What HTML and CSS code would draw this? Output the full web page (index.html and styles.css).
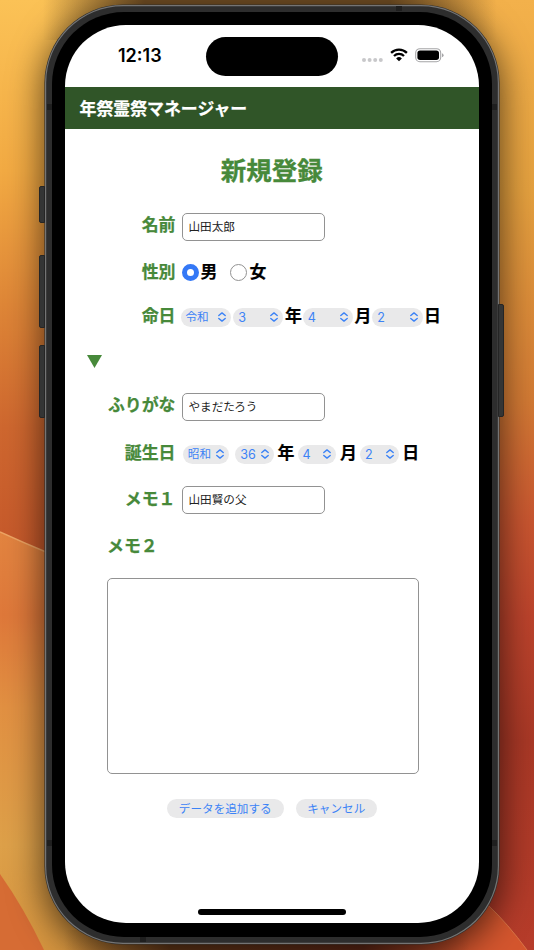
FILE: index.html
```html
<!DOCTYPE html>
<html lang="ja">
<head>
<meta charset="utf-8">
<title>年祭霊祭マネージャー</title>
<link rel="stylesheet" href="styles.css">
</head>
<body>
<svg class="wallpaper" viewBox="0 0 534 950" preserveAspectRatio="none" aria-hidden="true">
  <defs>
    <linearGradient id="left" x1="0" y1="0" x2="0" y2="1">
      <stop offset="0" stop-color="#fbc256"/><stop offset=".18" stop-color="#f2aa43"/><stop offset=".32" stop-color="#de8637"/><stop offset=".45" stop-color="#ce672f"/><stop offset=".6" stop-color="#c4562a"/>
    </linearGradient>
    <linearGradient id="right" x1="0" y1="0" x2="0" y2="1">
      <stop offset="0" stop-color="#f3b14b"/><stop offset=".2" stop-color="#e5a13f"/><stop offset=".42" stop-color="#d27a34"/><stop offset=".55" stop-color="#c85530"/><stop offset=".65" stop-color="#bb432c"/><stop offset=".78" stop-color="#a93826"/><stop offset="1" stop-color="#b63c2a"/>
    </linearGradient>
    <linearGradient id="wave" x1="0" y1="0" x2="0" y2="1">
      <stop offset="0" stop-color="#e28440"/><stop offset=".2" stop-color="#de783a"/><stop offset=".42" stop-color="#e19042"/><stop offset=".75" stop-color="#dda049"/><stop offset="1" stop-color="#d6953f"/>
    </linearGradient>
    <linearGradient id="shade">
      <stop offset=".08" stop-color="#745024" stop-opacity="0"/><stop offset=".27" stop-color="#745024"/><stop offset=".73" stop-color="#745024"/><stop offset=".93" stop-color="#745024" stop-opacity="0"/>
    </linearGradient>
    <linearGradient id="floor">
      <stop offset=".12" stop-color="#6b3c1a" stop-opacity="0"/><stop offset=".32" stop-color="#6b3c1a"/><stop offset=".68" stop-color="#652a17"/><stop offset=".88" stop-color="#652a17" stop-opacity="0"/>
    </linearGradient>
  </defs>
  <rect width="267" height="950" fill="url(#left)"/>
  <rect x="267" width="267" height="950" fill="url(#right)"/>
  <path d="M0 532Q24 543 46 552L267 650V950H0Z" fill="url(#wave)"/>
  <path d="M0 532Q24 543 46 552" fill="none" stroke="#eda463" stroke-width="1.4"/>
  <path d="M0 874Q24 908 44 950H0Z" fill="#d66c34"/>
  <path d="M267 860H440L488 905Q508 924 527 950H200Z" fill="#d4562e"/>
  <path d="M488 905Q508 924 527 950" fill="none" stroke="#d97547" stroke-width="1"/>
  <rect width="534" height="40" fill="url(#shade)"/>
  <rect y="930" width="534" height="20" fill="url(#floor)"/>
</svg>

<div class="phone">
  <i class="key key-mute"></i><i class="key key-up"></i><i class="key key-down"></i><i class="key key-power"></i>
  <i class="seam seam-tl"></i><i class="seam seam-tr"></i><i class="seam seam-bl"></i><i class="seam seam-br"></i><i class="seam seam-top"></i><i class="seam seam-bottom"></i>
  <div class="bezel">
    <div class="screen">
      <div class="status">
        <span class="time">12:13</span>
        <span class="island"></span>
        <span class="indicators">
          <svg class="dots" viewBox="0 0 21 4"><g fill="#c8c8ca"><circle cx="2" cy="2" r="2"/><circle cx="7.6" cy="2" r="2"/><circle cx="13.2" cy="2" r="2"/><circle cx="18.8" cy="2" r="2"/></g></svg>
          <svg class="wifi" viewBox="0 0 18 14"><g fill="none" stroke="#000" stroke-width="2.3"><path d="M1.1 4.9A11.2 11.2 0 0 1 16.9 4.9"/><path d="M4 8A7.1 7.1 0 0 1 14 8"/></g><path d="M9 13.3L6.1 10.4A4.1 4.1 0 0 1 11.9 10.4Z"/></svg>
          <svg class="battery" viewBox="0 0 29 15"><rect x=".7" y=".7" width="25" height="13" rx="4.2" fill="none" stroke="#a5a5a7" stroke-width="1.1"/><rect x="2.4" y="2.4" width="21.6" height="9.6" rx="2.7"/><path d="M27 5.2Q28.6 5.8 28.6 7.2T27 9.2Z" fill="#a5a5a7"/></svg>
        </span>
      </div>
      <header class="appbar">年祭霊祭マネージャー</header>
      <main class="form">
        <h1>新規登録</h1>
        <div class="row name">
          <label class="label raised" for="name">名前</label>
          <input class="field" id="name" type="text" value="山田太郎">
        </div>
        <div class="row gender">
          <span class="label">性別</span>
          <span class="radio checked"></span><b>男</b>
          <span class="radio second"></span><b>女</b>
        </div>
        <div class="row memorial">
          <span class="label lifted">命日</span>
          <span class="select">令和<svg viewBox="0 0 8 10"><path d="M.8 3.5L4 .9L7.2 3.5M.8 6.5L4 9.1L7.2 6.5"/></svg></span>
          <span class="select num">3<svg viewBox="0 0 8 10"><path d="M.8 3.5L4 .9L7.2 3.5M.8 6.5L4 9.1L7.2 6.5"/></svg></span><b>年</b>
          <span class="select num">4<svg viewBox="0 0 8 10"><path d="M.8 3.5L4 .9L7.2 3.5M.8 6.5L4 9.1L7.2 6.5"/></svg></span><b>月</b>
          <span class="select num">2<svg viewBox="0 0 8 10"><path d="M.8 3.5L4 .9L7.2 3.5M.8 6.5L4 9.1L7.2 6.5"/></svg></span><b>日</b>
        </div>
        <div class="toggle"><svg viewBox="0 0 15 13"><path d="M0 0H15L7.5 13Z" fill="#47893a"/></svg></div>
        <div class="row">
          <label class="label raised" for="kana">ふりがな</label>
          <input class="field" id="kana" type="text" value="やまだたろう">
        </div>
        <div class="row birthday">
          <span class="label lifted">誕生日</span>
          <span class="select era">昭和<svg viewBox="0 0 8 10"><path d="M.8 3.5L4 .9L7.2 3.5M.8 6.5L4 9.1L7.2 6.5"/></svg></span>
          <span class="select num">36<svg viewBox="0 0 8 10"><path d="M.8 3.5L4 .9L7.2 3.5M.8 6.5L4 9.1L7.2 6.5"/></svg></span><b>年</b>
          <span class="select num">4<svg viewBox="0 0 8 10"><path d="M.8 3.5L4 .9L7.2 3.5M.8 6.5L4 9.1L7.2 6.5"/></svg></span><b>月</b>
          <span class="select num">2<svg viewBox="0 0 8 10"><path d="M.8 3.5L4 .9L7.2 3.5M.8 6.5L4 9.1L7.2 6.5"/></svg></span><b>日</b>
        </div>
        <div class="row memo">
          <label class="label lifted" for="memo1">メモ１</label>
          <input class="field" id="memo1" type="text" value="山田賢の父">
        </div>
        <label class="memo2" for="memo2">メモ２</label>
        <textarea class="notes" id="memo2"></textarea>
        <div class="actions">
          <button class="submit" type="button">データを追加する</button>
          <button class="cancel" type="button">キャンセル</button>
        </div>
      </main>
      <div class="home"></div>
    </div>
  </div>
</div>
</body>
</html>
```
FILE: styles.css
```css
* { box-sizing: border-box; }
html, body { margin: 0; width: 534px; height: 950px; overflow: hidden; }
body {
  background: #c8692d;
  color: #000;
  font-family: Inter, "Noto Sans CJK JP", sans-serif;
  font-size: 16.9px;
}
.wallpaper { position: absolute; left: 0; top: 0; width: 534px; height: 950px; }

.phone {
  position: relative;
  width: 454px;
  height: 939px;
  margin: 4.5px 0 0 44.5px;
  padding: 7px;
  border-radius: 78px;
  background: #2d2d2d;
  box-shadow: inset 0 0 0 1.2px #747474, 0 0 0 .6px #34302b, 0 8px 34px 2px rgba(0, 0, 0, .62);
}
.key { position: absolute; width: 6px; left: -6px; background: #343535; border: 1px solid #252525; border-radius: 2px 0 0 2px; }
.key-mute { top: 181.5px; height: 37px; }
.key-up { top: 250px; height: 73px; }
.key-down { top: 340px; height: 73px; }
.key-power { left: auto; right: -5px; top: 299px; height: 113px; border-radius: 0 2px 2px 0; }
.seam { position: absolute; width: 5px; height: 6px; background: #1f1f1f; }
.seam-tl, .seam-tr { top: 99.5px; }
.seam-bl, .seam-br { bottom: 98px; }
.seam-tl, .seam-bl { left: 2px; }
.seam-tr, .seam-br { right: 2px; }
.seam-top { width: 6px; height: 5px; top: 1.5px; left: 351.5px; }
.seam-bottom { width: 6px; height: 5px; bottom: 1.5px; left: 95px; }
.bezel { height: 100%; padding: 13px 13px 13.5px 13.5px; border-radius: 72px; background: #000; }
.screen { position: relative; height: 100%; border-radius: 61px; overflow: hidden; background: #fff; }

.status { height: 62.5px; display: flex; align-items: flex-start; padding-top: 12px; }
.time { width: 141px; padding: 8px 0 0 53px; font-size: 18px; line-height: 22px; font-weight: 600; }
.island { width: 132px; height: 39px; border-radius: 20px; background: #000; }
.indicators { display: flex; align-items: center; height: 37px; padding-left: 24px; }
.dots { width: 21px; height: 4px; margin-top: 9px; }
.wifi { width: 18px; height: 14px; margin-left: 6.5px; }
.battery { width: 29px; height: 15px; margin-left: 7.5px; }

.appbar { height: 42px; padding-left: 14.5px; background: #305528; color: #fff; font-weight: 700; line-height: 44px; -webkit-text-stroke: .25px; }
.form { height: 780px; }
h1 { margin: 0; height: 82px; color: #47893a; font-size: 25.5px; line-height: 83px; text-align: center; -webkit-text-stroke: .3px; }
.row { display: flex; align-items: center; height: 32px; padding-left: 30px; white-space: nowrap; }
.row b { line-height: 24px; -webkit-text-stroke: .2px; }
.label { width: 80.5px; margin-right: 6px; text-align: right; color: #47893a; font-weight: 700; line-height: 24px; -webkit-text-stroke: .25px; }
.raised { padding-bottom: 5px; }
.lifted { padding-bottom: 2px; }
.field {
  width: 143px; height: 28px; margin: 0; padding: 0 6px 2px;
  border: 1px solid #929292; border-radius: 5px; background: #fff;
  color: #222; font-family: inherit; font-size: 11.6px;
}
.gender { margin-top: 13px; }
.radio { width: 17px; height: 17px; margin-right: 2px; border: 1.6px solid #929292; border-radius: 50%; }
.checked { border: 5px solid #3478f6; }
.second { margin-left: 13px; }
.select {
  display: flex; align-items: center; justify-content: space-between;
  width: 50.3px; height: 19px; padding: 0 5px; border-radius: 10px;
  background: #e9e9ea; color: #3c83f6; font-size: 11.6px; line-height: 19px;
}
.num { font-size: 12.6px; }
.select svg { width: 8px; height: 10px; fill: none; stroke: #3c83f6; stroke-width: 1.4; stroke-linecap: round; stroke-linejoin: round; }
.memorial { margin-top: 13px; }
.memorial .label { margin-right: 5px; }
.memorial .select + .select { margin-left: 2.4px; }
.memorial b { width: 17px; margin: 0 .9px 2px 1.4px; }
.toggle { height: 58px; padding: 22px 0 0 22px; }
.toggle svg { display: block; width: 15px; height: 13px; }
.birthday { margin-top: 15px; }
.birthday .label { margin-right: 7.3px; }
.birthday .select { width: 38.8px; }
.birthday .era { width: 46px; margin-right: 6.5px; }
.birthday b { width: 17px; margin: 0 3px 2px 3.5px; }
.memo { margin-top: 14px; }
.memo2 { display: block; height: 61.5px; padding-left: 42px; color: #47893a; font-weight: 700; line-height: 61px; -webkit-text-stroke: .25px; }
.notes { display: block; width: 312px; height: 196px; margin: 0 0 0 42px; border: 1px solid #929292; border-radius: 5px; resize: none; }
.actions { display: flex; gap: 12px; margin: 25.5px 0 0 102px; }
.actions button { height: 19px; padding: 1px 0 0; border: 0; border-radius: 10px; background: #e9e9ea; color: #3c83f6; font: 11.6px/18px Inter, "Noto Sans CJK JP", sans-serif; }
.submit { width: 116.5px; }
.cancel { width: 81.5px; }
.home { width: 148px; height: 6px; margin: 0 0 0 133px; border-radius: 3px; background: #000; }
```
